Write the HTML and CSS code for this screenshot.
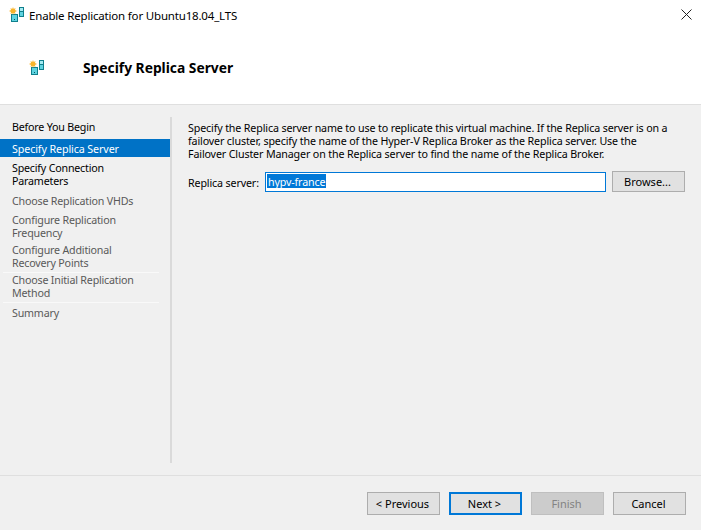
FILE: index.html
```html
<!DOCTYPE html>
<html lang="en">
<head>
<meta charset="utf-8">
<title>Enable Replication for Ubuntu18.04_LTS</title>
<link rel="stylesheet" href="styles.css">
</head>
<body>
<div class="window">
  <div class="top">
    <div class="titlebar">
      <svg class="icon" width="16" height="16" viewBox="0 0 16 16"><use href="#srv"/></svg>
      <span class="title-text">Enable Replication for Ubuntu18.04_LTS</span>
      <svg class="close" width="11" height="11" viewBox="0 0 11 11"><path d="M0.5 0.5L10.500 10.500M10.500 0.5L0.5 10.500" stroke="#222" stroke-width="1" fill="none"/></svg>
    </div>
    <div class="header">
      <svg class="icon" width="16" height="16" viewBox="0 0 16 16">
        <defs>
          <g id="srv">
            <rect x="10.500" y="0.5" width="4" height="9" fill="#5fd3e0" stroke="#0f7f8c"/>
            <rect x="11" y="1" width="3" height="3" fill="#a5eaf2"/>
            <rect x="11" y="4" width="3" height="1" fill="#0f7f8c"/>
            <rect x="2.500" y="7.500" width="6" height="7" fill="#5fd3e0" stroke="#0f7f8c"/>
            <rect x="5" y="12" width="1" height="1" fill="#0b5560"/>
            <path d="M4 0l.8 2 1.700-1-.5 2 2 1-2 .9.5 2.100-1.800-1-.7 2-.7-2-1.800 1 .5-2.100-2-.9 2-1-.5-2 1.700 1z" fill="#f9b52b"/>
          </g>
        </defs>
        <use href="#srv"/>
      </svg>
      <h1 class="heading">Specify Replica Server</h1>
    </div>
  </div>
  <div class="main">
    <nav class="nav">
      <div class="step step-first">Before You Begin</div>
      <div class="step step-active">Specify Replica Server</div>
      <div class="step step-conn">Specify Connection<br>Parameters</div>
      <div class="step step-off step-vhd">Choose Replication VHDs</div>
      <div class="step step-off step-freq">Configure Replication<br>Frequency</div>
      <div class="step step-off step-freq">Configure Additional<br>Recovery Points</div>
      <div class="step step-off step-init">Choose Initial Replication<br>Method</div>
      <div class="step step-off step-summary">Summary</div>
    </nav>
    <section class="content">
      <p class="intro">Specify the Replica server name to use to replicate this virtual machine. If the Replica server is on a<br>failover cluster, specify the name of the Hyper-V Replica Broker as the Replica server. Use the<br>Failover Cluster Manager on the Replica server to find the name of the Replica Broker.</p>
      <div class="field">
        <span class="label">Replica server:</span>
        <div class="input"><span class="selected">hypv-france</span></div>
        <button class="btn btn-browse">Browse...</button>
      </div>
    </section>
  </div>
  <div class="footer">
    <button class="btn">&lt; Previous</button>
    <button class="btn btn-default">Next &gt;</button>
    <button class="btn btn-disabled">Finish</button>
    <button class="btn">Cancel</button>
  </div>
</div>
</body>
</html>
```
FILE: styles.css
```css
* { box-sizing: border-box; }
html, body { margin: 0; padding: 0; }
body {
  width: 701px;
  height: 530px;
  overflow: hidden;
  background: #f0f0f0;
  font-family: "Noto Sans", "Open Sans", sans-serif;
  font-size: 10.700px;
  letter-spacing: -0.2px;
  color: #000;
}
.window { width: 701px; height: 530px; display: flex; flex-direction: column; }
.top { height: 105px; background: #fff; border-bottom: 1px solid #dfdfdf; }
.titlebar { height: 31px; display: flex; align-items: center; padding: 0 9px 1px 9px; }
.title-text { margin-left: 4px; font-size: 11.500px; letter-spacing: -0.18px; flex: 1; }
.close { margin-bottom: 1px; }
.icon { flex: none; display: block; }
.header { display: flex; align-items: center; height: 73px; padding: 0 0 0 29px; }
.heading { margin: 0 0 0 38px; font-size: 13.800px; font-weight: 700; letter-spacing: 0; color: #000; }
.main { flex: 1; display: flex; padding-top: 12px; height: 370px; }
.nav { width: 172px; height: 346px; border-right: 2px solid #dadada; flex: none; padding-top: 4px; }
.step { padding: 0 0 0 12px; line-height: 13px; width: 170px; }
.step-first { padding-bottom: 5px; }
.step-active { background: #0072c6; color: #fff; height: 18px; line-height: 20px; letter-spacing: -0.1px; }
.step-conn { padding-top: 5px; }
.step-off { color: #595959; }
.step-vhd { padding-top: 7px; padding-bottom: 6px; }
.step-freq { padding-bottom: 4px; }
.step-init { position: relative; }
.step-summary { position: relative; padding-top: 7px; }
.step-init::before,
.step-summary::before { content: ""; position: absolute; left: 3px; width: 156px; height: 1px; background: #f9f9f9; }
.step-init::before { top: -2px; }
.step-summary::before { top: 2px; }
.content { flex: 1; padding: 5px 15px 0 16px; letter-spacing: -0.14px; }
.intro { margin: 0; line-height: 13px; white-space: nowrap; }
.field { display: flex; align-items: flex-end; margin-top: 10px; }
.label { width: 77px; flex: none; line-height: 18px; }
.input { width: 341px; height: 20px; background: #fff; border: 1px solid #0078d7; padding: 1px 0 0 1px; line-height: 14px; flex: none; }
.selected { display: inline-block; background: #0078d7; color: #fff; padding: 0 1px; height: 14px; line-height: 16px; }
.btn {
  width: 73px; height: 23px; padding: 0 2px 0 0;
  font: inherit;
  font-size: 11px;
  letter-spacing: 0;
  color: #000;
  background: #e1e1e1;
  border: 1px solid #adadad;
  border-radius: 0;
}
.btn-browse { margin-left: 6px; height: 21px; }
.btn-default { border: 2px solid #0078d7; }
.btn-disabled { background: #ccc; border-color: #bfbfbf; color: #838383; }
.footer {
  height: 55px;
  border-top: 1px solid #dfdfdf;
  display: flex;
  justify-content: flex-end;
  gap: 9px;
  padding: 16px 15px 0 0;
}
```
